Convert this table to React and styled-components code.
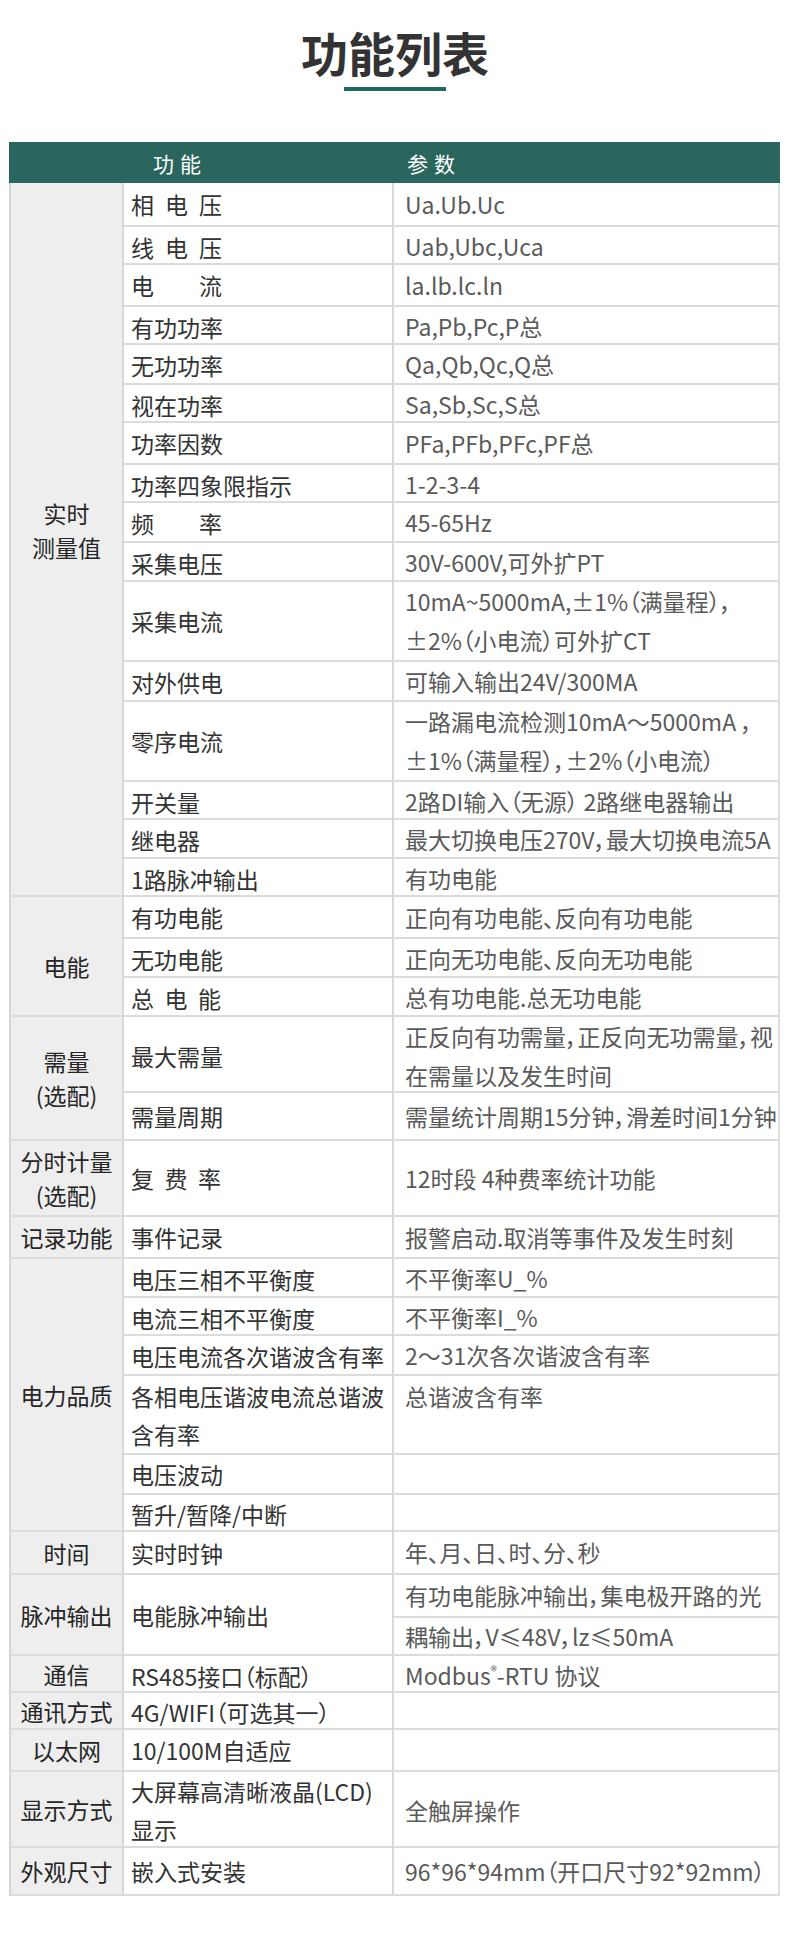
import React from 'react';
import styled, { createGlobalStyle } from 'styled-components';

const Global = createGlobalStyle`
  html, body { margin: 0; padding: 0; background: #ffffff; }
  body { font-family: "Noto Sans CJK SC", "Noto Sans", sans-serif; }
  * { box-sizing: border-box; }
`;

const Page = styled.div`
  width: 790px;
  min-height: 1955px;
  padding-top: 24px;
  font-feature-settings: "palt";
`;

const Title = styled.h1`
  margin: 0;
  text-align: center;
  font-size: 47px;
  line-height: 56px;
  font-weight: 700;
  color: #333333;
  letter-spacing: 0;
`;

const Underline = styled.div`
  width: 102px;
  height: 4px;
  margin: 7px auto 0;
  background: #1f6a60;
`;

const Table = styled.div`
  width: 771px;
  margin: 51px 0 0 9px;
`;

const Header = styled.div`
  display: grid;
  grid-template-columns: 385px 1fr;
  align-items: center;
  height: 41px;
  background: #2a665e;
  color: #ffffff;
  font-size: 21px;
  letter-spacing: 6px;
`;

const HeaderCell = styled.div`
  padding-left: ${(p) => p.$indent}px;
`;

const Body = styled.div`
  border-left: 2px solid #d6d6d6;
  border-right: 2px solid #dedede;
`;

const Group = styled.section`
  display: grid;
  grid-template-columns: 113px 1fr;
`;

const GroupLabel = styled.div`
  display: flex;
  flex-direction: column;
  align-items: center;
  justify-content: center;
  padding: ${(p) => (p.$offset > 0 ? `${p.$offset * 2}px 0 0` : `0 0 ${-p.$offset * 2}px`)};
  background: #eeeeee;
  border-right: 2px solid #d8d8d8;
  border-bottom: 2px solid #dcdcdc;
  color: #262626;
  font-size: 23px;
  line-height: 34px;
  text-align: center;
  white-space: nowrap;
`;

const Rows = styled.div`
  display: flex;
  flex-direction: column;
`;

const Row = styled.div`
  display: grid;
  grid-template-columns: 270px 1fr;
  height: ${(p) => p.$h}px;
  border-bottom: 2px solid #dcdcdc;
`;

const Name = styled.div`
  display: flex;
  flex-direction: column;
  justify-content: center;
  padding-left: 7px;
  border-right: 2px solid #d8d8d8;
  color: #333333;
  font-size: 23px;
  line-height: 38px;
  white-space: nowrap;
`;

const Spread = styled.span`
  display: flex;
  justify-content: space-between;
  width: ${(p) => p.$w}px;
`;

const Value = styled.div`
  display: flex;
  flex-direction: column;
  justify-content: ${(p) => (p.$top ? 'flex-start' : 'center')};
  padding-left: ${(p) => (p.$split ? 0 : 11)}px;
  color: #5a5a5a;
  font-size: 23px;
  line-height: ${(p) => (p.$top ? 40 : 39)}px;
  white-space: pre;
`;

const SubValue = styled.div`
  display: flex;
  align-items: center;
  height: ${(p) => p.$h}px;
  padding-left: 11px;
  & + & {
    border-top: 2px solid #dcdcdc;
  }
`;

const Line = styled.span`
  display: block;
`;

const Sup = styled.sup`
  font-size: 0.55em;
  line-height: 0;
  vertical-align: 0.75em;
`;

const sp = (text, w = 91) => ({ spread: text, w });

const groups = [
  {
    label: ['实时', '测量值'], offset: -9,
    rows: [
      { h: 44, name: sp('相电压'), value: ['Ua.Ub.Uc'] },
      { h: 38, name: sp('线电压'), value: ['Uab,Ubc,Uca'] },
      { h: 42, name: sp('电流'), value: ['la.lb.lc.ln'] },
      { h: 38, name: ['有功功率'], value: ['Pa,Pb,Pc,P总'] },
      { h: 40, name: ['无功功率'], value: ['Qa,Qb,Qc,Q总'] },
      { h: 38, name: ['视在功率'], value: ['Sa,Sb,Sc,S总'] },
      { h: 42, name: ['功率因数'], value: ['PFa,PFb,PFc,PF总'] },
      { h: 38, name: ['功率四象限指示'], value: ['1-2-3-4'] },
      { h: 40, name: sp('频率'), value: ['45-65Hz'] },
      { h: 39, name: ['采集电压'], value: ['30V-600V,可外扩PT'] },
      { h: 80, name: ['采集电流'], value: ['10mA~5000mA,±1%（满量程），', '±2%（小电流）可外扩CT'] },
      { h: 40, name: ['对外供电'], value: ['可输入输出24V/300MA'] },
      { h: 80, name: ['零序电流'], value: ['一路漏电流检测10mA～5000mA ，', '±1%（满量程），±2%（小电流）'] },
      { h: 38, name: ['开关量'], value: ['2路DI输入（无源） 2路继电器输出'] },
      { h: 39, name: ['继电器'], value: ['最大切换电压270V，最大切换电流5A'] },
      { h: 38, name: ['1路脉冲输出'], value: ['有功电能'] },
    ],
  },
  {
    label: ['电能'], offset: 10,
    rows: [
      { h: 42, name: ['有功电能'], value: ['正向有功电能、反向有功电能'] },
      { h: 39, name: ['无功电能'], value: ['正向无功电能、反向无功电能'] },
      { h: 39, name: sp('总电能', 90), value: ['总有功电能.总无功电能'] },
    ],
  },
  {
    label: ['需量', '(选配)'], offset: 0,
    rows: [
      { h: 76, name: ['最大需量'], value: ['正反向有功需量，正反向无功需量，视', '在需量以及发生时间'] },
      { h: 48, name: ['需量周期'], value: ['需量统计周期15分钟，滑差时间1分钟'] },
    ],
  },
  {
    label: ['分时计量', '(选配)'], offset: 0,
    rows: [{ h: 76, name: sp('复费率', 90), value: ['12时段 4种费率统计功能'] }],
  },
  {
    label: ['记录功能'], offset: 0,
    rows: [{ h: 42, name: ['事件记录'], value: ['报警启动.取消等事件及发生时刻'] }],
  },
  {
    label: ['电力品质'], offset: 0,
    rows: [
      { h: 39, name: ['电压三相不平衡度'], value: ['不平衡率U_%'] },
      { h: 38, name: ['电流三相不平衡度'], value: ['不平衡率I_%'] },
      { h: 40, name: ['电压电流各次谐波含有率'], value: ['2～31次各次谐波含有率'] },
      { h: 79, name: ['各相电压谐波电流总谐波', '含有率'], value: ['总谐波含有率'], top: true },
      { h: 40, name: ['电压波动'], value: [] },
      { h: 37, name: ['暂升/暂降/中断'], value: [] },
    ],
  },
  {
    label: ['时间'], offset: 0,
    rows: [{ h: 43, name: ['实时时钟'], value: ['年、月、日、时、分、秒'] }],
  },
  {
    label: ['脉冲输出'], offset: 0,
    rows: [
      {
        h: 81, name: ['电能脉冲输出'],
        split: [
          { h: 41, text: '有功电能脉冲输出，集电极开路的光' },
          { h: 38, text: '耦输出，V≤48V，lz≤50mA' },
        ],
      },
    ],
  },
  {
    label: ['通信'], offset: 0,
    rows: [{ h: 37, name: ['RS485接口（标配）'], value: [<>Modbus<Sup>®</Sup>-RTU 协议</>] }],
  },
  {
    label: ['通讯方式'], offset: 0,
    rows: [{ h: 37, name: ['4G/WIFI（可选其一）'], value: [] }],
  },
  {
    label: ['以太网'], offset: 0,
    rows: [{ h: 42, name: ['10/100M自适应'], value: [] }],
  },
  {
    label: ['显示方式'], offset: 0,
    rows: [{ h: 76, name: ['大屏幕高清晰液晶(LCD)', '显示'], value: ['全触屏操作'] }],
  },
  {
    label: ['外观尺寸'], offset: 0,
    rows: [{ h: 48, name: ['嵌入式安装'], value: ['96*96*94mm（开口尺寸92*92mm）'] }],
  },
];

function NameCell({ name }) {
  if (name.spread) {
    return (
      <Name>
        <Spread $w={name.w}>
          {name.spread.split('').map((c, i) => (
            <span key={i}>{c}</span>
          ))}
        </Spread>
      </Name>
    );
  }
  return (
    <Name>
      {name.map((l, i) => (
        <Line key={i}>{l}</Line>
      ))}
    </Name>
  );
}

function ValueCell({ row }) {
  if (row.split) {
    return (
      <Value $split>
        {row.split.map((s, i) => (
          <SubValue key={i} $h={s.h}>{s.text}</SubValue>
        ))}
      </Value>
    );
  }
  return (
    <Value $top={row.top}>
      {row.value.map((l, i) => (
        <Line key={i}>{l}</Line>
      ))}
    </Value>
  );
}

export default function App() {
  return (
    <Page>
      <Global />
      <Title>功能列表</Title>
      <Underline />
      <Table>
        <Header>
          <HeaderCell $indent={144}>功能</HeaderCell>
          <HeaderCell $indent={13}>参数</HeaderCell>
        </Header>
        <Body>
          {groups.map((g, gi) => (
            <Group key={gi}>
              <GroupLabel $offset={g.offset}>
                {g.label.map((l, i) => (
                  <Line key={i}>{l}</Line>
                ))}
              </GroupLabel>
              <Rows>
                {g.rows.map((r, ri) => (
                  <Row key={ri} $h={r.h}>
                    <NameCell name={r.name} />
                    <ValueCell row={r} />
                  </Row>
                ))}
              </Rows>
            </Group>
          ))}
        </Body>
      </Table>
    </Page>
  );
}
